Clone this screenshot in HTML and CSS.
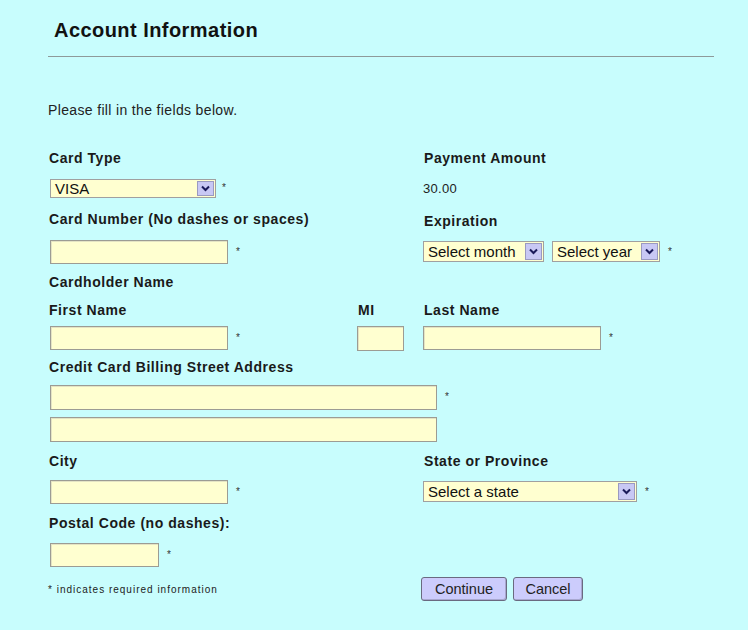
FILE: index.html
```html
<!DOCTYPE html>
<html>
<head>
<meta charset="utf-8">
<link rel="stylesheet" href="styles.css">
</head>
<body>
<div class="page">
  <h1 class="title">Account Information</h1>
  <div class="rule"></div>
  <p class="intro">Please fill in the fields below.</p>
  <div class="form">
    <div class="lbl c12">Card Type</div>
    <div class="lbl c3">Payment Amount</div>

    <div class="cell c12">
      <div class="select sel-card"><span class="val">VISA</span><span class="btn"><svg width="9" height="7" viewBox="0 0 9 7"><path d="M1 1.5 L4.5 5 L8 1.5" fill="none" stroke="#1a1a5a" stroke-width="2"/></svg></span></div>
      <span class="req">*</span>
    </div>
    <div class="cell c3 amount">30.00</div>

    <div class="lbl c12">Card Number (No dashes or spaces)</div>
    <div class="lbl c3 exp">Expiration</div>

    <div class="cell c12"><div class="input w178"></div><span class="req">*</span></div>
    <div class="cell c3">
      <div class="select sel-month"><span class="val">Select month</span><span class="btn"><svg width="9" height="7" viewBox="0 0 9 7"><path d="M1 1.5 L4.5 5 L8 1.5" fill="none" stroke="#1a1a5a" stroke-width="2"/></svg></span></div>
      <div class="select sel-year"><span class="val">Select year</span><span class="btn"><svg width="9" height="7" viewBox="0 0 9 7"><path d="M1 1.5 L4.5 5 L8 1.5" fill="none" stroke="#1a1a5a" stroke-width="2"/></svg></span></div>
      <span class="req">*</span>
    </div>

    <div class="lbl call">Cardholder Name</div>

    <div class="lbl c1">First Name</div>
    <div class="lbl c2">MI</div>
    <div class="lbl c3">Last Name</div>

    <div class="cell c1"><div class="input w178"></div><span class="req">*</span></div>
    <div class="cell c2"><div class="input mi"></div></div>
    <div class="cell c3"><div class="input w178"></div><span class="req">*</span></div>

    <div class="lbl call">Credit Card Billing Street Address</div>
    <div class="cell call"><div class="input addr"></div><span class="req">*</span></div>
    <div class="cell call"><div class="input addr"></div></div>

    <div class="lbl c12">City</div>
    <div class="lbl c3">State or Province</div>

    <div class="cell c12"><div class="input w178"></div><span class="req">*</span></div>
    <div class="cell c3">
      <div class="select sel-state"><span class="val">Select a state</span><span class="btn"><svg width="9" height="7" viewBox="0 0 9 7"><path d="M1 1.5 L4.5 5 L8 1.5" fill="none" stroke="#1a1a5a" stroke-width="2"/></svg></span></div>
      <span class="req">*</span>
    </div>

    <div class="lbl call">Postal Code (no dashes):</div>
    <div class="cell call"><div class="input postal"></div><span class="req">*</span></div>

    <div class="cell c12 note">* indicates required information</div>
    <div class="cell c3 buttons">
      <button class="button b-continue">Continue</button>
      <button class="button b-cancel">Cancel</button>
    </div>
  </div>
</div>
</body>
</html>
```

FILE: styles.css
```css
html, body {
  margin: 0;
  padding: 0;
  background: #ffffff;
}
body {
  font-family: "Liberation Sans", Arial, sans-serif;
  color: #111;
}
.page {
  background: #c8fdfd;
  height: 630px;
  overflow: hidden;
  box-sizing: border-box;
  padding-top: 1px;
}
.title {
  margin: 0;
  padding-left: 54px;
  padding-top: 17px;
  font-size: 20px;
  line-height: 24px;
  letter-spacing: 0.45px;
  font-weight: bold;
  color: #111;
}
.rule {
  margin: 14px 34px 0 48px;
  height: 1px;
  background: #8e9a9a;
}
.intro {
  margin: 0;
  padding-left: 48px;
  padding-top: 45px;
  font-size: 14px;
  line-height: 16px;
  letter-spacing: 0.35px;
  color: #222;
}
.form {
  margin-top: 25px;
  padding-left: 48px;
  display: grid;
  grid-template-columns: 308px 66px 1fr;
  grid-template-rows: 30px 30px 32px 33px 28px 28px 28px 29px 32px 32px 31px 31px 31px 34px 34px;
  align-items: center;
}
.c12 { grid-column: 1 / 3; }
.c1 { grid-column: 1; }
.c2 { grid-column: 2; }
.c3 { grid-column: 3; }
.call { grid-column: 1 / 4; }

.lbl {
  font-size: 14px;
  font-weight: bold;
  letter-spacing: 0.55px;
  color: #1a1a1a;
  padding-left: 1px;
  line-height: 16px;
}
.c2.lbl, .c3.lbl { padding-left: 2px; }
.exp { position: relative; top: 2px; }

.cell {
  display: flex;
  align-items: center;
  padding-left: 2px;
}
.c2.cell, .c3.cell { padding-left: 1px; }

.input {
  box-sizing: border-box;
  height: 24px;
  background: #ffffd0;
  border: 1px solid #9c9c94;
  box-shadow: inset 1px 1px 0 #e4e4c4;
}
.w178 { width: 178px; }
.mi { width: 47px; height: 25px; }
.addr { width: 387px; height: 25px; }
.postal { width: 109px; }

.req {
  font-size: 10px;
  color: #333;
  margin-left: 8px;
  line-height: 10px;
}

.select {
  box-sizing: border-box;
  display: flex;
  align-items: stretch;
  height: 20px;
  background: #ffffd0;
  border: 1px solid #a0a0a0;
  font-size: 15px;
  color: #111;
}
.select .val {
  flex: 1;
  padding-left: 4px;
  line-height: 18px;
  white-space: nowrap;
  overflow: hidden;
}
.select .btn {
  box-sizing: border-box;
  width: 17px;
  margin: 1px;
  background: #c8c8f4;
  border: 1px solid #9a9ac0;
  display: flex;
  align-items: center;
  justify-content: center;
}
.sel-card { width: 166px; height: 19px; }
.sel-card .val { line-height: 17px; }
.sel-card + .req { margin-left: 6px; }
.sel-month { width: 121px; height: 21px; }
.sel-year { width: 108px; height: 21px; margin-left: 8px; }
.sel-state { width: 214px; height: 21px; }
.sel-month .val, .sel-year .val, .sel-state .val { line-height: 19px; }

.amount {
  font-size: 13px;
  color: #222;
  padding-left: 2px;
  letter-spacing: 0.3px;
}

.note {
  font-size: 10px;
  letter-spacing: 1px;
  color: #222;
  padding-left: 0;
}

.buttons {
  display: flex;
  gap: 6px;
  margin-left: -2px;
}
.button {
  box-sizing: border-box;
  height: 24px;
  background: #ccccfc;
  border: 1px solid #6a6a80;
  border-radius: 3px;
  box-shadow: inset -1px -1px 0 #a8a8d0;
  font-family: "Liberation Sans", Arial, sans-serif;
  font-size: 14.5px;
  color: #222;
  padding: 0;
}
.b-continue { width: 86px; }
.b-cancel { width: 70px; }
```
